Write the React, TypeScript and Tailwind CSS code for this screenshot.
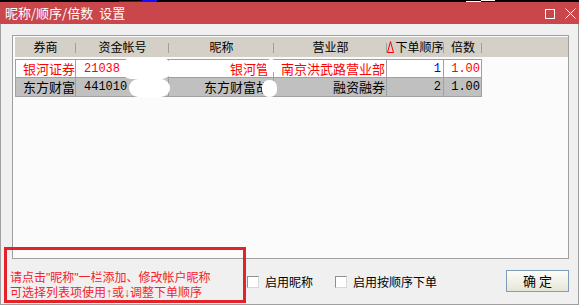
import React from 'react';

const cjk = { fontFamily: '"Noto Sans CJK SC", "Noto Sans", sans-serif' };
const mono = { fontFamily: '"Liberation Mono", "Noto Sans CJK SC", monospace' };
const hint = { fontFamily: '"Liberation Sans", "Noto Sans CJK SC", sans-serif' };

const columns = [
    { title: '券商', w: 'w-[61px]' },
    { title: '资金帐号', w: 'w-[93px]' },
    { title: '昵称', w: 'w-[105px]' },
    { title: '营业部', w: 'w-[113px]' },
    { title: '下单顺序', w: 'w-[57px]', sort: true },
    { title: '倍数', w: 'w-[38px]' },
];

const rows = [
    { broker: '银河证券', account: '21038', nick: '银河管', branch: '南京洪武路营业部', order: '1', ratio: '1.00', active: true },
    { broker: '东方财富', account: '441010', nick: '东方财富胡', branch: '融资融券', order: '2', ratio: '1.00', active: false },
];

function SortMark() {
    return (
        <svg width="7" height="12" viewBox="0 0 7 12" className="mr-[1px]">
            <path d="M3.5 0.5 L6.5 11.5 H0.5 Z" fill="none" stroke="#ff0000" strokeWidth="1" />
        </svg>
    );
}

function Checkbox({ label }: { label: string }) {
    return (
        <div className="flex items-center">
            <span className="w-[12px] h-[12px] bg-white border border-[#8e8f8f] border-r-[#d8d8d8] border-b-[#d8d8d8]" />
            <span className="ml-[6px] text-[12px] leading-[15px] text-black" style={cjk}>{label}</span>
        </div>
    );
}

export default function App() {
    return (
        <div className="relative w-[579px] h-[305px] overflow-hidden bg-[#f0f0f0] flex flex-col" style={cjk}>
            {/* top edge */}
            <div className="h-[2px] bg-black flex shrink-0">
                <span className="ml-[119px] w-[23px] h-[1px] mt-[1px] bg-[#1010ff]" />
                <span className="w-[15px] h-[2px] bg-[#1010ff]" />
                <span className="ml-[309px] w-[15px] h-[1px] mt-[1px] bg-white" />
                <span className="w-[14px] h-[1px] bg-white" />
            </div>

            {/* title bar */}
            <div className="h-[22px] bg-[#c9464b] flex items-center shrink-0">
                <span className="pl-[5px] text-[13px] leading-[16px] text-white">
                    昵称/顺序/倍数<span className="ml-[6px]">设置</span>
                </span>
                <div className="ml-auto flex items-center gap-[10px] pr-[3px] mt-[1px]">
                    <span className="w-[10px] h-[10px] border border-white" />
                    <svg width="11" height="11" viewBox="0 0 11 11">
                        <path d="M0.5 0.5 L10.5 10.5 M10.5 0.5 L0.5 10.5" stroke="#ffffff" strokeWidth="1" />
                    </svg>
                </div>
            </div>

            {/* body */}
            <div className="flex-1 flex flex-col pl-[11px] pr-[9px] pt-[11px] border-l border-r border-b border-[#a0a0a0]">
                <div className="h-[224px] border border-[#a0a0a0] bg-[#fbfbfb] pl-[2px] pt-[1px] shrink-0">
                    {/* header */}
                    <div className="h-[20px] bg-[#d4d0c8] flex text-[12px] text-black">
                        {columns.map((c) => (
                            <div key={c.title} className={`${c.w} relative flex items-center justify-center shrink-0`}>
                                {c.sort && <SortMark />}
                                <span className="leading-[14px]">{c.title}</span>
                                <span className="absolute right-0 top-[6px] h-[10px] w-px bg-[#a0a0a0]" />
                            </div>
                        ))}
                    </div>

                    {/* rows */}
                    <div className="mt-[2px] w-[467px] border-t border-l border-[#a0a0a0]">
                        {rows.map((r, i) => (
                            <div
                                key={r.broker}
                                className={`flex border-b border-[#a0a0a0] ${i === 0 ? 'h-[18px] bg-white' : 'h-[19px] bg-[#c0c0c0]'} ${r.active ? 'text-[#ff0000]' : 'text-black'}`}
                            >
                                <div className="w-[60px] border-r border-[#a0a0a0] flex items-center pl-[7px] overflow-hidden whitespace-nowrap text-[13px]">{r.broker}</div>
                                <div className="w-[93px] border-r border-[#a0a0a0] flex items-center pl-[8px] text-[12px]" style={mono}>{r.account}</div>
                                <div className="w-[105px] border-r border-[#a0a0a0] flex items-center justify-end pr-[4px] overflow-hidden whitespace-nowrap text-[13px]">{r.nick}</div>
                                <div className="w-[113px] border-r border-[#a0a0a0] flex items-center justify-end pr-[1px] overflow-hidden whitespace-nowrap text-[13px]">{r.branch}</div>
                                <div className={`w-[57px] border-r border-[#a0a0a0] flex items-center justify-end pr-[2px] text-[12px] ${r.active ? 'text-[#0000ff]' : ''}`} style={mono}>{r.order}</div>
                                <div className="w-[38px] border-r border-[#a0a0a0] flex items-center justify-end pr-[1px] text-[12px]" style={mono}>{r.ratio}</div>
                            </div>
                        ))}
                    </div>
                </div>

                {/* bottom bar */}
                <div className="flex items-start">
                    <div className="w-[235px] -ml-[2px] mt-[12px] text-[12px] leading-[15px] text-[#f5222d] whitespace-nowrap" style={hint}>
                        <div>请点击"昵称"一栏添加、修改帐户昵称</div>
                        <div>可选择列表项使用↑或↓调整下单顺序</div>
                    </div>
                    <div className="ml-[2px] mt-[15px] flex items-center">
                        <Checkbox label="启用昵称" />
                        <div className="ml-[22px]">
                            <Checkbox label="启用按顺序下单" />
                        </div>
                    </div>
                    <button className="ml-auto mt-[11px] w-[63px] h-[22px] border border-[#7f9db9] bg-gradient-to-b from-[#fdfdf9] to-[#e6e6d7] text-[13px] leading-[16px] text-black">
                        确 定
                    </button>
                </div>
            </div>

            {/* redaction blobs over the list */}
            <span className="absolute left-[121px] top-[58px] w-[51px] h-[21px] rounded-[10px] bg-white" />
            <span className="absolute left-[129px] top-[79px] w-[41px] h-[18px] rounded-[9px] bg-white" />
            <span className="absolute left-[266px] top-[59px] w-[10px] h-[14px] rounded-[5px] bg-white" />
            <span className="absolute left-[262px] top-[80px] w-[15px] h-[17px] rounded-[7px] bg-white" />

            {/* annotation box */}
            <div className="absolute left-[4px] top-[247px] w-[242px] h-[56px] border-[3px] border-[#e4222a]" />
        </div>
    );
}
